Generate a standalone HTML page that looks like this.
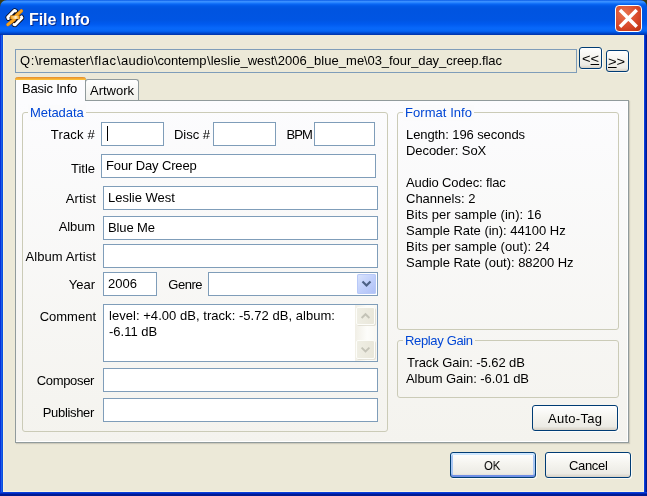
<!DOCTYPE html>
<html><head><meta charset="utf-8">
<style>
html,body{margin:0;padding:0;}
body{width:647px;height:496px;overflow:hidden;position:relative;background:#0831d9;font-family:"Liberation Sans",sans-serif;font-size:13px;color:#000;}
.abs{position:absolute;}
.t,.lbl,.gbl{will-change:transform;}
.t{position:absolute;white-space:nowrap;line-height:16px;height:16px;}
#titlebar{left:0;top:0;width:647px;height:35px;border-radius:7px 7px 0 0;
background:linear-gradient(to bottom,#0a5be6 0px,#3a8fff 1.5px,#2a86ff 2.5px,#0a68f5 4px,#0058e6 6px,#0054e0 9px,#0055e3 20px,#005aef 24px,#0868fa 28px,#0666f5 31px,#0052dc 32.5px,#003dba 34px,#0033a8 35px);}
#corner-l{left:0;top:0;width:8px;height:8px;background:#3a3a12;}
#corner-r{right:0;top:0;width:8px;height:8px;background:#3a3a12;}
#client{left:3px;top:35px;width:641px;height:457px;background:#ece9d8;box-sizing:border-box;border:1px solid #f7f2dc;border-top:none;}
#bl{left:0;top:35px;width:3px;height:461px;background:linear-gradient(to right,#0831d9 0,#0831d9 1px,#1a5fe8 1px,#1a5fe8 2px,#0a4fe0 2px);}
#br{left:644px;top:35px;width:3px;height:461px;background:linear-gradient(to right,#0a3fd8 0,#0a3fd8 1px,#0028c0 1px,#0028c0 2px,#001a90 2px);}
#bb{left:0;top:492px;width:647px;height:4px;background:linear-gradient(to bottom,#0a3fd8 0,#0a3fd8 1px,#0028c0 1px,#0028c0 2px,#001a90 2px);}
#title{left:29px;top:10px;font-weight:bold;font-size:16px;letter-spacing:-0.08px;color:#fff;text-shadow:1px 1px 0 #0a2a8a;line-height:20px;height:20px;}
#close{left:615px;top:5px;width:25px;height:25px;border:1px solid #fff;border-radius:4px;
background:radial-gradient(circle at 35% 30%,#e9734f 0%,#d9492a 55%,#b8300f 100%);}
.inp{position:absolute;box-sizing:border-box;border:1px solid #7f9db9;background:#fff;height:24px;}
.gb{position:absolute;box-sizing:border-box;border:1px solid #cbcbb7;border-radius:3px;}
.gbl{position:absolute;color:#0046d5;white-space:nowrap;line-height:16px;height:16px;padding:0 2px;}
.btn{position:absolute;box-sizing:border-box;border:1px solid #003c74;border-radius:3px;box-shadow:1px 1px 0 rgba(255,255,255,0.75);
background:linear-gradient(to bottom,#ffffff 0%,#f5f4ef 45%,#ecebe5 85%,#d6d0c5 100%);text-align:center;}
.lbl{position:absolute;white-space:nowrap;line-height:16px;height:16px;text-align:right;}
</style></head><body>
<div class="abs" id="corner-l"></div><div class="abs" id="corner-r"></div>
<div class="abs" id="titlebar"></div>
<div class="abs" id="bl"></div><div class="abs" id="br"></div><div class="abs" id="bb"></div>
<div class="abs" id="client"></div>
<div class="t" id="title">File Info</div>
<div class="abs" id="close"><svg width="25" height="25" viewBox="0 0 25 25" style="position:absolute;left:0;top:0"><path d="M5.2 5.3 L19.5 19.6 M19.5 5.3 L5.2 19.6" stroke="#fff" stroke-width="3.5" stroke-linecap="square"/></svg></div>
<svg class="abs" id="icon" style="left:5px;top:8px" width="20" height="20" viewBox="0 0 20 20">
<defs><linearGradient id="bg" x1="0" y1="0" x2="1" y2="0"><stop offset="0" stop-color="#f7a018"/><stop offset="0.3" stop-color="#fdc96a"/><stop offset="0.6" stop-color="#fff1d6"/><stop offset="0.85" stop-color="#fbb848"/><stop offset="1" stop-color="#f59c12"/></linearGradient></defs>
<path d="M9.6 3 L16.6 9.4 L9.7 16.6 L3 9.7 Z" fill="#14142a"/>
<path d="M10.6 2.9 L9.4 2.5 L2.7 9.3 L3.3 10.6" fill="none" stroke="#0c0c18" stroke-width="4.6" stroke-linejoin="round" stroke-linecap="round"/>
<path d="M16.5 8.8 L17 9.8 L10 16.9 L8.9 16.5" fill="none" stroke="#0c0c18" stroke-width="4.6" stroke-linejoin="round" stroke-linecap="round"/>
<path d="M10.6 2.9 L9.4 2.5 L2.7 9.3 L3.3 10.6" fill="none" stroke="#fff" stroke-width="2.9" stroke-linejoin="round" stroke-linecap="round"/>
<path d="M16.5 8.8 L17 9.8 L10 16.9 L8.9 16.5" fill="none" stroke="#fff" stroke-width="2.9" stroke-linejoin="round" stroke-linecap="round"/>
<g stroke="#c9780e" stroke-width="3.5" stroke-linecap="round" fill="none"><path d="M16.4 2.9 L11 7.8"/><path d="M9.4 11.4 L2.9 16.6"/></g>
<path d="M5.2 7.4 H14.8 V11.3 H5.2 Z" fill="#c9780e"/>
<g stroke="#f9a520" stroke-width="2.5" stroke-linecap="round" fill="none"><path d="M16.4 2.9 L11 7.8"/><path d="M9.4 11.4 L2.9 16.6"/></g>
<path d="M5.7 7.8 H14.3 V10.9 H5.7 Z" fill="url(#bg)"/>
</svg>

<!-- path field -->
<div class="inp" style="left:15px;top:49px;width:562px;height:24px;background:#ece9d8;"></div>
<div class="t" id="p0" style="left:20.2px;top:53px;letter-spacing:0.55px;">Q:</div><div class="t" id="p1" style="left:35.4px;top:53px;letter-spacing:0.01px;">\remaster</div><div class="t" id="p2" style="left:90.4px;top:53px;letter-spacing:0.57px;">\flac</div><div class="t" id="p3" style="left:117.1px;top:53px;letter-spacing:0.28px;">\audio</div><div class="t" id="p4" style="left:154.2px;top:53px;letter-spacing:-0.14px;">\contemp</div><div class="t" id="p5" style="left:206.6px;top:53px;letter-spacing:0.02px;">\leslie_west</div><div class="t" id="p6" style="left:274.0px;top:53px;letter-spacing:0.04px;">\2006_blue_me</div><div class="t" id="p7" style="left:364.1px;top:53px;letter-spacing:-0.07px;">\03_four_day_creep.flac</div>
<div class="btn" style="left:579px;top:47px;width:23px;height:22px;"></div>
<div class="t" id="prev" style="left:581.6px;top:51px;transform:scaleX(1.13);transform-origin:0 0;">&lt;<u>&lt;</u></div>
<div class="btn" style="left:606px;top:50px;width:23px;height:22px;"></div>
<div class="t" id="next" style="left:608px;top:54px;transform:scaleX(1.13);transform-origin:0 0;"><u>&gt;</u>&gt;</div>

<!-- tab page -->
<div class="abs" id="page" style="left:15px;top:100px;width:614px;height:343px;box-sizing:border-box;border:1px solid #919b9c;background:linear-gradient(to bottom,#fcfcfe 0%,#f4f3ee 100%);box-shadow:inset -1px -1px 0 #fff,1px 1px 1px rgba(0,0,0,0.13);"></div>
<!-- inactive tab -->
<div class="abs" id="tab2" style="left:85px;top:79px;width:54px;height:21px;box-sizing:border-box;border:1px solid #919b9c;border-bottom:none;border-radius:3px 3px 0 0;background:linear-gradient(to bottom,#ffffff 0%,#f0f0ea 100%);"></div>
<div class="t" id="t2" style="left:90px;top:83px;">Artwork</div>
<!-- active tab -->
<div class="abs" id="tab1" style="left:15px;top:77px;width:71px;height:24px;box-sizing:border-box;border:1px solid #919b9c;border-bottom:none;border-top:none;border-radius:3px 3px 0 0;background:#fcfcfe;"></div>
<div class="abs" style="left:15px;top:77px;width:71px;height:3px;border-radius:3px 3px 0 0;background:linear-gradient(to bottom,#e68b2c,#ffc73c);"></div>
<div class="t" id="t1" style="left:22px;top:81px;letter-spacing:-0.2px;">Basic Info</div>

<!-- Metadata group -->
<div class="gb" style="left:22px;top:112px;width:366px;height:320px;"></div>
<div class="gbl" id="g1" style="left:28px;top:105px;background:#fbfbfc;letter-spacing:-0.08px;">Metadata</div>

<div class="lbl" id="l1" style="left:20px;width:75px;top:127px;letter-spacing:0.2px;">Track #</div>
<div class="inp" style="left:101px;top:122px;width:63px;"></div>
<div class="abs" style="left:107px;top:126px;width:1px;height:15px;background:#000;"></div>
<div class="lbl" id="l2" style="left:150px;width:60px;top:127px;">Disc #</div>
<div class="inp" style="left:213px;top:122px;width:63px;"></div>
<div class="lbl" id="l3" style="left:260px;width:52px;top:127px;letter-spacing:-0.85px;">BPM</div>
<div class="inp" style="left:314px;top:122px;width:61px;"></div>

<div class="lbl" id="l4" style="left:20px;width:75px;top:161px;">Title</div>
<div class="inp" style="left:101px;top:154px;width:275px;"></div>
<div class="t" id="v4" style="left:106px;top:158px;letter-spacing:-0.13px;">Four Day Creep</div>

<div class="lbl" id="l5" style="left:20px;width:76px;top:191px;letter-spacing:0.1px;">Artist</div>
<div class="inp" style="left:103px;top:186px;width:275px;"></div>
<div class="t" id="v5" style="left:108px;top:190px;">Leslie West</div>

<div class="lbl" id="l6" style="left:20px;width:75px;top:219px;letter-spacing:-0.1px;">Album</div>
<div class="inp" style="left:103px;top:216px;width:275px;"></div>
<div class="t" id="v6" style="left:108px;top:220px;letter-spacing:-0.13px;">Blue Me</div>

<div class="lbl" id="l7" style="left:20px;width:76px;top:249px;letter-spacing:0.1px;">Album Artist</div>
<div class="inp" style="left:103px;top:244px;width:275px;"></div>

<div class="lbl" id="l8" style="left:20px;width:75px;top:277px;">Year</div>
<div class="inp" style="left:103px;top:272px;width:54px;"></div>
<div class="t" id="v8" style="left:108px;top:276px;">2006</div>
<div class="lbl" id="l9" style="left:150px;width:52px;top:277px;letter-spacing:-0.5px;">Genre</div>
<div class="inp" style="left:208px;top:272px;width:170px;"></div>
<div class="abs" id="dd" style="left:357px;top:274px;width:19px;height:20px;border-radius:2px;background:linear-gradient(135deg,#dbe5fc 0%,#c1d0fb 50%,#aebff5 100%);box-shadow:inset 0 0 0 1px #b8c9f8;">
<svg width="19" height="20" viewBox="0 0 19 20" style="position:absolute;left:0;top:0"><path d="M5.5 7.5 L9.5 11.5 L13.5 7.5" fill="none" stroke="#4d6185" stroke-width="2.2"/></svg></div>

<div class="lbl" id="l10" style="left:20px;width:76px;top:309px;">Comment</div>
<div class="inp" style="left:103px;top:304px;width:275px;height:58px;"></div>
<div class="t" id="v10a" style="left:109px;top:308px;letter-spacing:0.04px;">level: +4.00 dB, track: -5.72 dB, album:</div>
<div class="t" id="v10b" style="left:109px;top:324px;">-6.11 dB</div>
<!-- scrollbar -->
<div class="abs" style="left:355px;top:305px;width:22px;height:56px;background:linear-gradient(to right,#f1efe6 0%,#fdfdfa 55%,#f9f8f3 100%);"></div>
<div class="abs sb" style="left:356px;top:307px;width:19px;height:18px;box-sizing:border-box;border:1px solid #fdfdf9;border-radius:2px;background:linear-gradient(to right,#efeee4,#e9e7da);box-shadow:1px 1px 0 rgba(205,201,185,0.5);">
<svg width="17" height="16" viewBox="0 0 17 16" style="position:absolute;left:0;top:0"><path d="M4.6 10 L8.5 6.2 L12.4 10" fill="none" stroke="#c4c3b7" stroke-width="1.9"/></svg></div>
<div class="abs sb" style="left:356px;top:340px;width:19px;height:19px;box-sizing:border-box;border:1px solid #fdfdf9;border-radius:2px;background:linear-gradient(to right,#efeee4,#e9e7da);box-shadow:1px 1px 0 rgba(205,201,185,0.5);">
<svg width="17" height="17" viewBox="0 0 17 17" style="position:absolute;left:0;top:0"><path d="M4.6 6.6 L8.5 10.4 L12.4 6.6" fill="none" stroke="#c4c3b7" stroke-width="1.9"/></svg></div>

<div class="lbl" id="l11" style="left:20px;width:74px;top:373px;letter-spacing:-0.35px;">Composer</div>
<div class="inp" style="left:103px;top:368px;width:275px;"></div>
<div class="lbl" id="l12" style="left:20px;width:74px;top:405px;letter-spacing:-0.33px;">Publisher</div>
<div class="inp" style="left:103px;top:398px;width:275px;"></div>

<!-- Format Info group -->
<div class="gb" style="left:397px;top:112px;width:222px;height:218px;"></div>
<div class="gbl" id="g2" style="left:403px;top:105px;background:#fbfbfc;letter-spacing:0.05px;">Format Info</div>
<div class="t" id="f1" style="left:406px;top:127px;letter-spacing:-0.09px;">Length: 196 seconds</div>
<div class="t" id="f2" style="left:406px;top:143px;letter-spacing:-0.06px;">Decoder: SoX</div>
<div class="t" id="f3" style="left:406px;top:175px;letter-spacing:-0.13px;">Audio Codec: flac</div>
<div class="t" id="f4" style="left:406px;top:191px;letter-spacing:0px;">Channels: 2</div>
<div class="t" id="f5" style="left:406px;top:207px;letter-spacing:0.08px;">Bits per sample (in): 16</div>
<div class="t" id="f6" style="left:406px;top:223px;letter-spacing:-0.03px;">Sample Rate (in): 44100 Hz</div>
<div class="t" id="f7" style="left:406px;top:239px;letter-spacing:0.08px;">Bits per sample (out): 24</div>
<div class="t" id="f8" style="left:406px;top:255px;letter-spacing:-0.03px;">Sample Rate (out): 88200 Hz</div>

<!-- Replay Gain group -->
<div class="gb" style="left:397px;top:340px;width:222px;height:58px;"></div>
<div class="gbl" id="g3" style="left:403px;top:333px;background:#f6f5f1;letter-spacing:-0.35px;">Replay Gain</div>
<div class="t" id="r1" style="left:407px;top:355px;letter-spacing:-0.08px;">Track Gain: -5.62 dB</div>
<div class="t" id="r2" style="left:406px;top:371px;letter-spacing:-0.07px;">Album Gain: -6.01 dB</div>

<div class="btn" style="left:532px;top:405px;width:86px;height:26px;"></div>
<div class="t" id="b1" style="left:547.5px;top:411px;letter-spacing:0.28px;">Auto-Tag</div>

<div class="btn" id="okb" style="left:450px;top:452px;width:86px;height:26px;box-shadow:inset 0 2px 0 #cee7ff,inset 0 -2px 0 #6f8fe6,inset 2px 0 0 #a9c7f3,inset -2px 0 0 #a9c7f3,1px 1px 0 rgba(255,255,255,0.75);"></div>
<div class="t" id="b2" style="left:484px;top:458px;transform:scaleX(0.87);transform-origin:0 0;">OK</div>
<div class="btn" style="left:545px;top:452px;width:86px;height:26px;"></div>
<div class="t" id="b3" style="left:568.5px;top:458px;letter-spacing:-0.33px;">Cancel</div>
</body></html>
